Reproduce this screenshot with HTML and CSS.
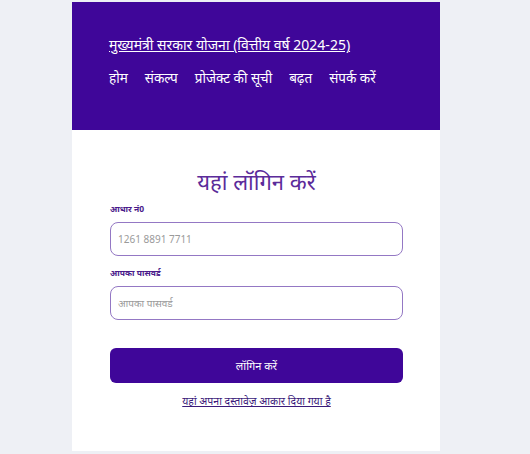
FILE: index.html
```html
<!DOCTYPE html>
<html lang="hi">
<head>
<meta charset="utf-8">
<title>लॉगिन</title>
<link rel="stylesheet" href="styles.css">
</head>
<body>
<div class="card">
  <header class="hero">
    <a class="brand" href="#">मुख्यमंत्री सरकार योजना (वित्तीय वर्ष 2024-25)</a>
    <nav class="nav">
      <a href="#">होम</a>
      <a href="#">संकल्प</a>
      <a href="#">प्रोजेक्ट की सूची</a>
      <a href="#">बढ़त</a>
      <a href="#">संपर्क करें</a>
    </nav>
  </header>
  <main class="form">
    <h1 class="title">यहां लॉगिन करें</h1>
    <label class="label">आधार नं0</label>
    <div class="input">1261 8891 7711</div>
    <label class="label">आपका पासवर्ड</label>
    <div class="input">आपका पासवर्ड</div>
    <button class="btn">लॉगिन करें</button>
    <a class="link" href="#">यहां अपना दस्तावेज़ आकार दिया गया है</a>
  </main>
</div>
</body>
</html>
```
FILE: styles.css
```css
html, body {
  margin: 0;
  padding: 0;
  background: #eef0f5;
  font-family: "Noto Sans", "Open Sans", sans-serif;
}
.card {
  margin: 2px 0 0 72px;
  width: 368px;
  height: 449px;
  background: #ffffff;
  display: flex;
  flex-direction: column;
}
.hero {
  background: #3f0699;
  height: 128px;
  box-sizing: border-box;
  padding: 33px 0 0 37px;
  display: flex;
  flex-direction: column;
  gap: 13px;
}
.brand {
  color: #ffffff;
  font-size: 14px;
  text-decoration: underline;
  line-height: 20px;
  align-self: flex-start;
}
.nav {
  display: flex;
  gap: 17px;
}
.nav a {
  color: #ffffff;
  text-decoration: none;
  font-size: 13.5px;
  line-height: 20px;
}
.form {
  padding: 36px 37px 0 38px;
  display: flex;
  flex-direction: column;
}
.title {
  margin: 0;
  text-align: center;
  font-weight: 400;
  font-size: 22px;
  line-height: 30px;
  color: #5b2b9a;
}
.label {
  margin-top: 7px;
  font-size: 8.5px;
  font-weight: 700;
  line-height: 12px;
  color: #4a1a8a;
}
.input {
  margin-top: 7px;
  height: 34px;
  box-sizing: border-box;
  border: 1px solid #9478c4;
  border-radius: 8px;
  padding: 0 7px;
  display: flex;
  align-items: center;
  font-size: 10px;
  color: #9a9a9a;
  margin-bottom: 4px;
}
.btn {
  margin-top: 24px;
  height: 35px;
  border: 0;
  border-radius: 6px;
  background: #3f0699;
  color: #ffffff;
  font-family: inherit;
  font-size: 11px;
}
.link {
  margin-top: 11px;
  text-align: center;
  font-size: 10.5px;
  color: #3a1a7a;
  text-decoration: underline;
  align-self: center;
}
```
